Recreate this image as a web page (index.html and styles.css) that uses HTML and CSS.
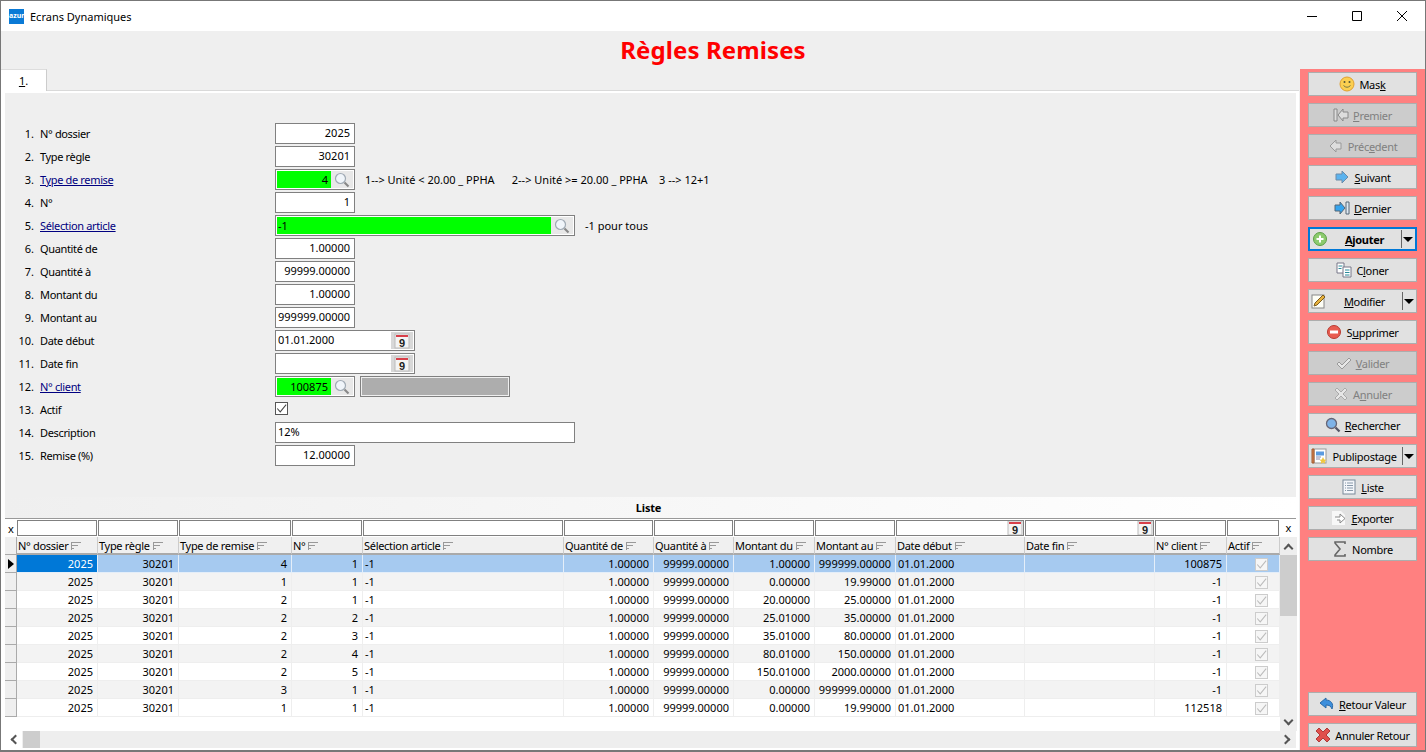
FILE: index.html
```html
<!DOCTYPE html>
<html>
<head>
  <title>Ecrans Dynamiques</title>
  <link rel="stylesheet" href="styles.css">
</head>
<body>
<svg class="defs" width="0" height="0">
  <defs>
    <symbol id="i-sort" viewBox="0 0 10 8"><path d="M0 .5h10M0 3.5h7M0 6.5h3M.5 0v8" stroke="#999" fill="none"/></symbol>
    <symbol id="i-check" viewBox="0 0 13 13"><path d="M1.500 6.500l3.500 4L12 2" stroke="currentColor" stroke-width="1.200" fill="none"/></symbol>
    <symbol id="i-lens" viewBox="0 0 16 16"><circle cx="6.500" cy="6.500" r="5" fill="#f0f5fa" stroke="#a0aab4" stroke-width="1.200"/><path d="M10.500 10.500l4 4" stroke="#888" stroke-width="2.200"/></symbol>
    <symbol id="i-cal" viewBox="0 0 16 16"><rect x="1" y="1" width="14" height="14" fill="#f4f4f4" stroke="#bbb"/><rect x="2" y="2" width="12" height="2" fill="#d8404a"/><text x="8" y="14" text-anchor="middle" font-family="Liberation Sans" font-size="11" font-weight="bold" fill="#222">9</text></symbol>
    <symbol id="i-smile" viewBox="0 0 16 16"><circle cx="8" cy="8" r="7" fill="#fbcf50" stroke="#e0a030"/><path d="M4.500 9.500q3.500 3.500 7 0" stroke="#774" fill="none"/><circle cx="5.500" cy="6" r="1" fill="#553"/><circle cx="10.500" cy="6" r="1" fill="#553"/></symbol>
    <symbol id="i-first" viewBox="0 0 16 16"><path d="M1 2h3v12H1zM15 5H10V2L5 8l5 6v-3h5z" fill="#ddd" stroke="#888"/></symbol>
    <symbol id="i-prev" viewBox="0 0 16 16"><path d="M13 5H8V2L2 8l6 6v-3h5z" fill="#ddd" stroke="#999"/></symbol>
    <symbol id="i-next" viewBox="0 0 16 16"><path d="M2 5h6V2l6 6-6 6v-3H2z" fill="#5cb3ee" stroke="#6c8ba8"/></symbol>
    <symbol id="i-last" viewBox="0 0 16 16"><path d="M1 5h5V2l5 6-5 6v-3H1z" fill="#35a4ee" stroke="#567"/><path d="M12 2h3v12h-3z" fill="#dfeaf4" stroke="#567"/></symbol>
    <symbol id="i-plus" viewBox="0 0 16 16"><circle cx="8" cy="8" r="6.500" fill="#8ccb6e" stroke="#5d9e48"/><path d="M8 4.500v7M4.500 8h7" stroke="#fff" stroke-width="2"/></symbol>
    <symbol id="i-clone" viewBox="0 0 16 16"><path d="M1 1h7v10H1z" fill="#fff" stroke="#778"/><path d="M7 5h8v10H7z" fill="#fff" stroke="#778"/><path d="M2.500 4h4M2.500 6.500h3M9 8h4.500M9 10.500h4.500M9 13h4.500" stroke="#2a8a9a"/></symbol>
    <symbol id="i-pencil" viewBox="0 0 16 16"><rect x="1" y="2" width="12" height="13" fill="#fdfdf5" stroke="#888"/><path d="M3 13l1-3 8-8 2 2-8 8z" fill="#e8b23c" stroke="#7a5b20"/></symbol>
    <symbol id="i-minus" viewBox="0 0 16 16"><circle cx="8" cy="8" r="6.500" fill="#e85c50" stroke="#b83a30"/><rect x="4" y="6.500" width="8" height="3" fill="#fff"/></symbol>
    <symbol id="i-valid" viewBox="0 0 16 16"><path d="M1 9l2-2 3 3 7-7 2 2-9 9z" fill="#e6e6e6" stroke="#999"/></symbol>
    <symbol id="i-cancel" viewBox="0 0 16 16"><path d="M2 4l2-2 4 4 4-4 2 2-4 4 4 4-2 2-4-4-4 4-2-2 4-4z" fill="#e6e6e6" stroke="#aaa"/></symbol>
    <symbol id="i-search" viewBox="0 0 16 16"><circle cx="6.500" cy="6.500" r="5" fill="#7fb3e8" stroke="#667" stroke-width="1.300"/><path d="M10.500 10.500l4 4" stroke="#556" stroke-width="2.300"/></symbol>
    <symbol id="i-publi" viewBox="0 0 16 16"><rect x="3" y="1" width="12" height="14" fill="#fff" stroke="#999"/><path d="M1 1h2v14H1z" fill="#d8814c" stroke="#a05a30"/><rect x="5" y="3.500" width="8" height="4" fill="#5b9be0"/><path d="M5 9h5M5 11h4" stroke="#88a"/><path d="M12 9l1.200 2.400 2.400.3-1.800 1.600.5 2.400-2.300-1.200-2.300 1.200.5-2.400-1.800-1.600 2.400-.3z" fill="#f0c840"/></symbol>
    <symbol id="i-list" viewBox="0 0 16 16"><rect x="2" y="1" width="12" height="14" fill="#f4f6fa" stroke="#7a8a9a"/><path d="M4 4h1M6 4h6M4 6.500h1M6 6.500h6M4 9h1M6 9h6M4 11.500h1M6 11.500h6" stroke="#8899aa"/></symbol>
    <symbol id="i-export" viewBox="0 0 16 16"><path d="M1 1h9l4 4v10H1z" fill="#f7f7f7"/><path d="M4 7h5V4l5 4.500L9 13v-3H6" fill="#fff" stroke="#888"/></symbol>
    <symbol id="i-sigma" viewBox="0 0 16 16"><path d="M13 3V1H3v1l5 6-5 6v1h10v-2" fill="none" stroke="#666" stroke-width="1.600"/></symbol>
    <symbol id="i-back" viewBox="0 0 16 16"><path d="M7 2L1 7l6 5V9c3 0 5 1 6 4 2-5-1-9-6-9z" fill="#3d8fdc" stroke="#2a6aa8"/></symbol>
    <symbol id="i-bigx" viewBox="0 0 16 16"><path d="M1 4l3-3 4 4 4-4 3 3-4 4 4 4-3 3-4-4-4 4-3-3 4-4z" fill="#e0504c" stroke="#b03a38"/></symbol>
  </defs>
</svg>

<div class="window">
  <div class="titlebar">
    <span class="app-logo">azur</span>
    <span class="app-name">Ecrans Dynamiques</span>
    <div class="win-controls">
      <svg width="10" height="10" viewBox="0 0 10 10"><path d="M0 5.500h10" stroke="#000"/></svg>
      <svg width="10" height="10" viewBox="0 0 10 10"><path d="M.5.500h9v9h-9z" stroke="#000" fill="none"/></svg>
      <svg width="10" height="10" viewBox="0 0 10 10"><path d="M0 0l10 10M10 0L0 10" stroke="#000" fill="none"/></svg>
    </div>
  </div>

  <h1 class="page-title">Règles Remises</h1>

  <div class="content">
    <div class="left">
      <div class="tabs"><div class="tab"><u>1</u>.</div></div>
      <div class="pane">
        <div class="panel">
          <div class="form">
            <div class="row"><span class="num">1.</span><span class="lbl">N° dossier</span><div class="field w80 right">2025</div></div>
            <div class="row"><span class="num">2.</span><span class="lbl">Type règle</span><div class="field w80 right">30201</div></div>
            <div class="row"><span class="num">3.</span><a class="lbl link">Type de remise</a>
              <div class="field w80 combo"><span class="val green right">4</span><span class="btn-ico"><svg width="16" height="16"><use href="#i-lens"/></svg></span></div>
              <span class="hint">1--&gt; Unité &lt; 20.00 _ PPHA &nbsp;&nbsp;&nbsp;&nbsp; 2--&gt; Unité &gt;= 20.00 _ PPHA &nbsp;&nbsp; 3 --&gt; 12+1</span></div>
            <div class="row"><span class="num">4.</span><span class="lbl">N°</span><div class="field w80 right">1</div></div>
            <div class="row"><span class="num">5.</span><a class="lbl link">Sélection article</a>
              <div class="field w300 combo"><span class="val green">-1</span><span class="btn-ico"><svg width="16" height="16"><use href="#i-lens"/></svg></span></div>
              <span class="hint">-1 pour tous</span></div>
            <div class="row"><span class="num">6.</span><span class="lbl">Quantité de</span><div class="field w80 right">1.00000</div></div>
            <div class="row"><span class="num">7.</span><span class="lbl">Quantité à</span><div class="field w80 right">99999.00000</div></div>
            <div class="row"><span class="num">8.</span><span class="lbl">Montant du</span><div class="field w80 right">1.00000</div></div>
            <div class="row"><span class="num">9.</span><span class="lbl">Montant au</span><div class="field w80 right">999999.00000</div></div>
            <div class="row"><span class="num">10.</span><span class="lbl">Date début</span>
              <div class="field w140 combo date"><span class="val">01.01.2000</span><span class="btn-ico cal"><svg width="16" height="16"><use href="#i-cal"/></svg></span></div></div>
            <div class="row"><span class="num">11.</span><span class="lbl">Date fin</span>
              <div class="field w140 combo date"><span class="val"></span><span class="btn-ico cal"><svg width="16" height="16"><use href="#i-cal"/></svg></span></div></div>
            <div class="row"><span class="num">12.</span><a class="lbl link">N° client</a>
              <div class="field w80 combo"><span class="val green right">100875</span><span class="btn-ico"><svg width="16" height="16"><use href="#i-lens"/></svg></span></div>
              <div class="field readonly"></div></div>
            <div class="row"><span class="num">13.</span><span class="lbl">Actif</span><span class="checkbox"><svg width="11" height="11"><use href="#i-check"/></svg></span></div>
            <div class="row"><span class="num">14.</span><span class="lbl">Description</span><div class="field w300">12%</div></div>
            <div class="row"><span class="num">15.</span><span class="lbl">Remise (%)</span><div class="field w80 right">12.00000</div></div>
          </div>

          <div class="list-title">Liste</div>

          <div class="grid-wrap">
            <div class="grid-area">
              <table class="grid">
                <colgroup>
                  <col class="c-h"><col class="c1"><col class="c2"><col class="c3"><col class="c4"><col class="c5"><col class="c6"><col class="c7"><col class="c8"><col class="c9"><col class="c10"><col class="c11"><col class="c12"><col class="c13">
                </colgroup>
                <thead>
                  <tr class="filter">
                    <th class="x">x</th>
                    <th><span class="fbox"></span></th><th><span class="fbox"></span></th><th><span class="fbox"></span></th><th><span class="fbox"></span></th><th><span class="fbox"></span></th><th><span class="fbox"></span></th><th><span class="fbox"></span></th><th><span class="fbox"></span></th><th><span class="fbox"></span></th>
                    <th><span class="fbox"><svg class="fcal"><use href="#i-cal"/></svg></span></th>
                    <th><span class="fbox"><svg class="fcal"><use href="#i-cal"/></svg></span></th>
                    <th><span class="fbox"></span></th><th><span class="fbox"></span></th>
                  </tr>
                  <tr class="heads">
                    <th class="handle"></th>
                    <th>N° dossier<svg class="sort"><use href="#i-sort"/></svg></th>
                    <th>Type règle<svg class="sort"><use href="#i-sort"/></svg></th>
                    <th>Type de remise<svg class="sort"><use href="#i-sort"/></svg></th>
                    <th>N°<svg class="sort"><use href="#i-sort"/></svg></th>
                    <th>Sélection article<svg class="sort"><use href="#i-sort"/></svg></th>
                    <th>Quantité de<svg class="sort"><use href="#i-sort"/></svg></th>
                    <th>Quantité à<svg class="sort"><use href="#i-sort"/></svg></th>
                    <th>Montant du<svg class="sort"><use href="#i-sort"/></svg></th>
                    <th>Montant au<svg class="sort"><use href="#i-sort"/></svg></th>
                    <th>Date début<svg class="sort"><use href="#i-sort"/></svg></th>
                    <th>Date fin<svg class="sort"><use href="#i-sort"/></svg></th>
                    <th>N° client<svg class="sort"><use href="#i-sort"/></svg></th>
                    <th>Actif<svg class="sort"><use href="#i-sort"/></svg></th>
                  </tr>
                </thead>
                <tbody>
                  <tr class="selected"><td class="handle"><span class="arrow"></span></td><td class="r current">2025</td><td class="r">30201</td><td class="r">4</td><td class="r">1</td><td>-1</td><td class="r">1.00000</td><td class="r">99999.00000</td><td class="r">1.00000</td><td class="r">999999.00000</td><td>01.01.2000</td><td></td><td class="r">100875</td><td class="c"><span class="cell-check"><svg width="11" height="11"><use href="#i-check"/></svg></span></td></tr>
                  <tr><td class="handle"></td><td class="r">2025</td><td class="r">30201</td><td class="r">1</td><td class="r">1</td><td>-1</td><td class="r">1.00000</td><td class="r">99999.00000</td><td class="r">0.00000</td><td class="r">19.99000</td><td>01.01.2000</td><td></td><td class="r">-1</td><td class="c"><span class="cell-check"><svg width="11" height="11"><use href="#i-check"/></svg></span></td></tr>
                  <tr><td class="handle"></td><td class="r">2025</td><td class="r">30201</td><td class="r">2</td><td class="r">1</td><td>-1</td><td class="r">1.00000</td><td class="r">99999.00000</td><td class="r">20.00000</td><td class="r">25.00000</td><td>01.01.2000</td><td></td><td class="r">-1</td><td class="c"><span class="cell-check"><svg width="11" height="11"><use href="#i-check"/></svg></span></td></tr>
                  <tr><td class="handle"></td><td class="r">2025</td><td class="r">30201</td><td class="r">2</td><td class="r">2</td><td>-1</td><td class="r">1.00000</td><td class="r">99999.00000</td><td class="r">25.01000</td><td class="r">35.00000</td><td>01.01.2000</td><td></td><td class="r">-1</td><td class="c"><span class="cell-check"><svg width="11" height="11"><use href="#i-check"/></svg></span></td></tr>
                  <tr><td class="handle"></td><td class="r">2025</td><td class="r">30201</td><td class="r">2</td><td class="r">3</td><td>-1</td><td class="r">1.00000</td><td class="r">99999.00000</td><td class="r">35.01000</td><td class="r">80.00000</td><td>01.01.2000</td><td></td><td class="r">-1</td><td class="c"><span class="cell-check"><svg width="11" height="11"><use href="#i-check"/></svg></span></td></tr>
                  <tr><td class="handle"></td><td class="r">2025</td><td class="r">30201</td><td class="r">2</td><td class="r">4</td><td>-1</td><td class="r">1.00000</td><td class="r">99999.00000</td><td class="r">80.01000</td><td class="r">150.00000</td><td>01.01.2000</td><td></td><td class="r">-1</td><td class="c"><span class="cell-check"><svg width="11" height="11"><use href="#i-check"/></svg></span></td></tr>
                  <tr><td class="handle"></td><td class="r">2025</td><td class="r">30201</td><td class="r">2</td><td class="r">5</td><td>-1</td><td class="r">1.00000</td><td class="r">99999.00000</td><td class="r">150.01000</td><td class="r">2000.00000</td><td>01.01.2000</td><td></td><td class="r">-1</td><td class="c"><span class="cell-check"><svg width="11" height="11"><use href="#i-check"/></svg></span></td></tr>
                  <tr><td class="handle"></td><td class="r">2025</td><td class="r">30201</td><td class="r">3</td><td class="r">1</td><td>-1</td><td class="r">1.00000</td><td class="r">99999.00000</td><td class="r">0.00000</td><td class="r">999999.00000</td><td>01.01.2000</td><td></td><td class="r">-1</td><td class="c"><span class="cell-check"><svg width="11" height="11"><use href="#i-check"/></svg></span></td></tr>
                  <tr><td class="handle"></td><td class="r">2025</td><td class="r">30201</td><td class="r">1</td><td class="r">1</td><td>-1</td><td class="r">1.00000</td><td class="r">99999.00000</td><td class="r">0.00000</td><td class="r">19.99000</td><td>01.01.2000</td><td></td><td class="r">112518</td><td class="c"><span class="cell-check"><svg width="11" height="11"><use href="#i-check"/></svg></span></td></tr>
                </tbody>
              </table>
            </div>
            <div class="vscroll">
              <span class="x-top">x</span>
              <span class="chev up"></span>
              <span class="thumb-v"></span>
              <span class="track"></span>
              <span class="chev down"></span>
            </div>
          </div>
          <div class="hscroll">
            <span class="chev left"></span>
            <span class="thumb-h"></span>
            <span class="track"></span>
            <span class="chev right"></span>
          </div>
        </div>
      </div>
    </div>

    <div class="side">
      <div class="actions">
        <button class="act"><svg width="16" height="16"><use href="#i-smile"/></svg><span>Mas<u>k</u></span></button>
        <button class="act off"><svg width="16" height="16"><use href="#i-first"/></svg><span><u>P</u>remier</span></button>
        <button class="act off"><svg width="16" height="16"><use href="#i-prev"/></svg><span>Préc<u>e</u>dent</span></button>
        <button class="act"><svg width="16" height="16"><use href="#i-next"/></svg><span><u>S</u>uivant</span></button>
        <button class="act"><svg width="16" height="16"><use href="#i-last"/></svg><span><u>D</u>ernier</span></button>
        <button class="act split focus"><svg width="16" height="16"><use href="#i-plus"/></svg><span class="cap"><u>A</u>jouter</span><span class="drop"></span></button>
        <button class="act"><svg width="16" height="16"><use href="#i-clone"/></svg><span>C<u>l</u>oner</span></button>
        <button class="act split"><svg width="16" height="16"><use href="#i-pencil"/></svg><span class="cap"><u>M</u>odifier</span><span class="drop"></span></button>
        <button class="act"><svg width="16" height="16"><use href="#i-minus"/></svg><span>S<u>u</u>pprimer</span></button>
        <button class="act off"><svg width="16" height="16"><use href="#i-valid"/></svg><span><u>V</u>alider</span></button>
        <button class="act off"><svg width="16" height="16"><use href="#i-cancel"/></svg><span>A<u>n</u>nuler</span></button>
        <button class="act"><svg width="16" height="16"><use href="#i-search"/></svg><span><u>R</u>echercher</span></button>
        <button class="act split"><svg width="16" height="16"><use href="#i-publi"/></svg><span class="cap">Publipostage</span><span class="drop"></span></button>
        <button class="act"><svg width="16" height="16"><use href="#i-list"/></svg><span><u>L</u>iste</span></button>
        <button class="act"><svg width="16" height="16"><use href="#i-export"/></svg><span><u>E</u>xporter</span></button>
        <button class="act"><svg width="16" height="16"><use href="#i-sigma"/></svg><span>Nombre</span></button>
      </div>
      <div class="actions">
        <button class="act"><svg width="16" height="16"><use href="#i-back"/></svg><span><u>R</u>etour Valeur</span></button>
        <button class="act"><svg width="16" height="16"><use href="#i-bigx"/></svg><span>Annuler Retour</span></button>
      </div>
    </div>
  </div>
</div>
</body>
</html>
```

FILE: styles.css
```css
html, body {
  margin: 0;
  height: 100%;
  overflow: hidden;
}

body {
  font-family: "Noto Sans", "DejaVu Sans", sans-serif;
  font-size: 11px;
  color: #000;
}

.defs {
  display: block;
  height: 0;
}

.window {
  box-sizing: border-box;
  width: 1426px;
  height: 752px;
  display: flex;
  flex-direction: column;
  background: #efefef;
  border: 1px solid #777;
  border-bottom-width: 2px;
}

/* title bar */
.titlebar {
  flex: none;
  height: 30px;
  display: flex;
  align-items: center;
  background: #fff;
  padding-left: 8px;
}

.app-logo {
  width: 15px;
  height: 15px;
  background: #0a7ad6;
  color: #fff;
  font-size: 7px;
  font-weight: bold;
  line-height: 13px;
  text-align: center;
  overflow: hidden;
}

.app-name {
  margin-left: 6px;
  font-size: 11px;
}

.win-controls {
  margin-left: auto;
  display: flex;
  gap: 35px;
  padding-right: 18px;
}

.page-title {
  flex: none;
  height: 38px;
  margin: 0;
  color: #f00;
  font-size: 24px;
  font-weight: bold;
  line-height: 38px;
  letter-spacing: .1px;
  text-align: center;
}

/* main area */
.content {
  flex: 1;
  display: flex;
  min-height: 0;
}

.left {
  width: 1298px;
  margin-right: 1px;
  display: flex;
  flex-direction: column;
  background: #fff;
}

.tabs {
  flex: none;
  height: 21px;
  border-bottom: 1px solid #d9d9d9;
  background: #efefef;
}

.tab {
  box-sizing: border-box;
  width: 46px;
  height: 22px;
  background: #fff;
  border-top: 1px solid #ddd;
  border-right: 1px solid #ccc;
  text-align: center;
  line-height: 21px;
}

.pane {
  flex: 1;
  min-height: 0;
  padding: 2px 3px 2px 4px;
}

.panel {
  height: 100%;
  display: flex;
  flex-direction: column;
  background: #efefef;
}

/* form */
.form {
  flex: none;
  box-sizing: border-box;
  height: 404px;
  padding-top: 30px;
}

.row {
  height: 23px;
  display: flex;
  align-items: flex-start;
}

.num {
  width: 29px;
  text-align: right;
  line-height: 22px;
}

.lbl {
  width: 235px;
  margin-left: 6px;
  line-height: 22px;
  letter-spacing: -.35px;
}

.link {
  color: #000080;
  text-decoration: underline;
}

.field {
  box-sizing: border-box;
  height: 21px;
  background: #fff;
  border: 1px solid #808080;
  padding: 0 4px 0 2px;
  line-height: 18px;
  white-space: nowrap;
}

.w80 { width: 80px; }
.w140 { width: 140px; }
.w300 { width: 300px; }
.right { text-align: right; }

.combo {
  display: flex;
  padding: 1px;
}

.val {
  flex: 1;
  padding: 0 3px 0 1px;
  line-height: 17px;
}

.date .val {
  line-height: 15px;
}

.green {
  background: #0f0;
}

.btn-ico {
  flex: none;
  width: 22px;
  display: flex;
  align-items: center;
  justify-content: center;
  background: #e8e8e8;
}

.cal {
  background: #d8d8d8;
}

.hint {
  margin-left: 10px;
  line-height: 22px;
}

.readonly {
  width: 150px;
  margin-left: 5px;
  padding: 1px;
  background: #adadad;
  box-shadow: inset 0 0 0 1px #efefef;
}

.checkbox {
  box-sizing: border-box;
  width: 13px;
  height: 13px;
  margin-top: 3px;
  display: flex;
  align-items: center;
  justify-content: center;
  background: #fff;
  border: 1px solid #555;
  color: #444;
}

/* list */
.list-title {
  flex: none;
  height: 21px;
  padding-right: 4px;
  background: linear-gradient(to right, #efefef, #fff);
  border-bottom: 1px solid #999;
  font-weight: bold;
  line-height: 21px;
  letter-spacing: -.2px;
  text-align: center;
}

.grid-wrap {
  flex: 1;
  min-height: 0;
  display: flex;
  background: #fff;
}

.grid-area {
  width: 1275px;
}

.grid {
  width: 1275px;
  table-layout: fixed;
  border-collapse: separate;
  border-spacing: 0;
}

.c-h { width: 12px; }
.c1, .c2, .c8, .c9 { width: 81px; }
.c3 { width: 113px; }
.c4 { width: 71px; }
.c5 { width: 201px; }
.c6 { width: 90px; }
.c7 { width: 80px; }
.c10 { width: 129px; }
.c11 { width: 130px; }
.c12 { width: 72px; }
.c13 { width: 53px; }

.grid th, .grid td {
  box-sizing: border-box;
  padding: 0 2px;
  overflow: hidden;
  white-space: nowrap;
  font-weight: normal;
  text-align: left;
}

.filter th {
  height: 18px;
  padding: 1px 1px 1px 0;
}

.grid .x {
  text-align: center;
  padding: 0;
}

.fbox {
  box-sizing: border-box;
  height: 16px;
  display: flex;
  justify-content: flex-end;
  background: #fff;
  border: 1px solid #808080;
  overflow: hidden;
}

.fcal {
  width: 16px;
  height: 16px;
  margin-top: -1px;
}

.heads th {
  height: 18px;
  padding: 0 1px;
  background: #f0f0f0;
  border-right: 1px solid #ccc;
  border-bottom: 2px solid #aaa;
  letter-spacing: -.3px;
}

.sort {
  width: 10px;
  height: 8px;
  margin-left: 3px;
}

.grid td {
  height: 18px;
  padding: 0 3px 0 2px;
  border-right: 1px solid #eee;
  border-bottom: 1px solid #eee;
}

.grid td.r {
  padding-right: 4px;
  text-align: right;
}

.grid td.c {
  padding: 0;
}

.grid .handle {
  padding: 0;
  background: #efefef;
  border-right: 1px solid #aaa;
  border-bottom: 1px solid #aaa;
}

.grid tbody tr:nth-child(even) td {
  background: #f3f3f3;
}

.grid tbody tr:nth-child(even) td.handle {
  background: #efefef;
}

.grid tbody tr.selected td {
  background: #a6caf0;
  border-color: #e4eef9;
}

.grid tbody tr.selected td.handle {
  background: #efefef;
  border-color: #aaa;
}

.grid tbody tr.selected td.current {
  background: #0078d7;
  color: #fff;
}

.arrow {
  display: block;
  width: 0;
  height: 0;
  margin-left: 3px;
  border-left: 6px solid #000;
  border-top: 5px solid transparent;
  border-bottom: 5px solid transparent;
}

.cell-check {
  box-sizing: border-box;
  width: 13px;
  height: 13px;
  margin: 2px 0 0 28px;
  display: block;
  background: #f6f6f6;
  border: 1px solid #ccc;
  color: #bbb;
  line-height: 0;
}

/* scrollbars */
.vscroll {
  width: 17px;
  display: flex;
  flex-direction: column;
  align-items: center;
  background: #fff;
}

.x-top {
  flex: none;
  height: 18px;
  line-height: 18px;
}

.vscroll .track, .hscroll .track {
  flex: 1;
  align-self: stretch;
  background: #eee;
}

.vscroll .chev {
  align-self: stretch;
  height: 18px;
  background: #eee;
}

.thumb-v {
  flex: none;
  align-self: stretch;
  height: 61px;
  background: #cdcdcd;
}

.hscroll {
  flex: none;
  height: 17px;
  display: flex;
  background: #eee;
}

.thumb-h {
  flex: none;
  width: 17px;
  background: #cdcdcd;
}

.chev {
  flex: none;
  width: 17px;
  display: flex;
  align-items: center;
  justify-content: center;
}

.chev::before {
  content: "";
  width: 5px;
  height: 5px;
  border-top: 2px solid #555;
  border-left: 2px solid #555;
}

.chev.up::before { transform: translateY(2px) rotate(45deg); }
.chev.down::before { transform: translateY(-2px) rotate(225deg); }
.chev.left::before { transform: translateX(2px) rotate(-45deg); }
.chev.right::before { transform: translateX(-2px) rotate(135deg); }

/* action buttons */
.side {
  flex: 1;
  display: flex;
  flex-direction: column;
  justify-content: space-between;
  padding: 3px 8px 3px 8px;
  background: #ff8080;
}

.actions {
  display: flex;
  flex-direction: column;
  gap: 7px;
}

.act {
  box-sizing: border-box;
  width: 109px;
  height: 24px;
  padding: 0;
  display: flex;
  align-items: center;
  justify-content: center;
  gap: 4px;
  background: #e1e1e1;
  border: 1px solid #adadad;
  font: inherit;
  letter-spacing: -.3px;
  color: #000;
}

.off {
  background: #ccc;
  color: #808080;
}

.split {
  gap: 0;
  padding-left: 2px;
}

.cap {
  flex: 1;
  text-align: center;
}

.drop {
  flex: none;
  width: 12px;
  height: 18px;
  margin-right: 1px;
  border-left: 1px solid #666;
  display: flex;
  align-items: center;
  justify-content: center;
}

.drop::after {
  content: "";
  border-top: 5px solid #000;
  border-left: 5px solid transparent;
  border-right: 5px solid transparent;
}

.focus {
  border: 2px solid #0078d7;
  font-weight: bold;
}
```
